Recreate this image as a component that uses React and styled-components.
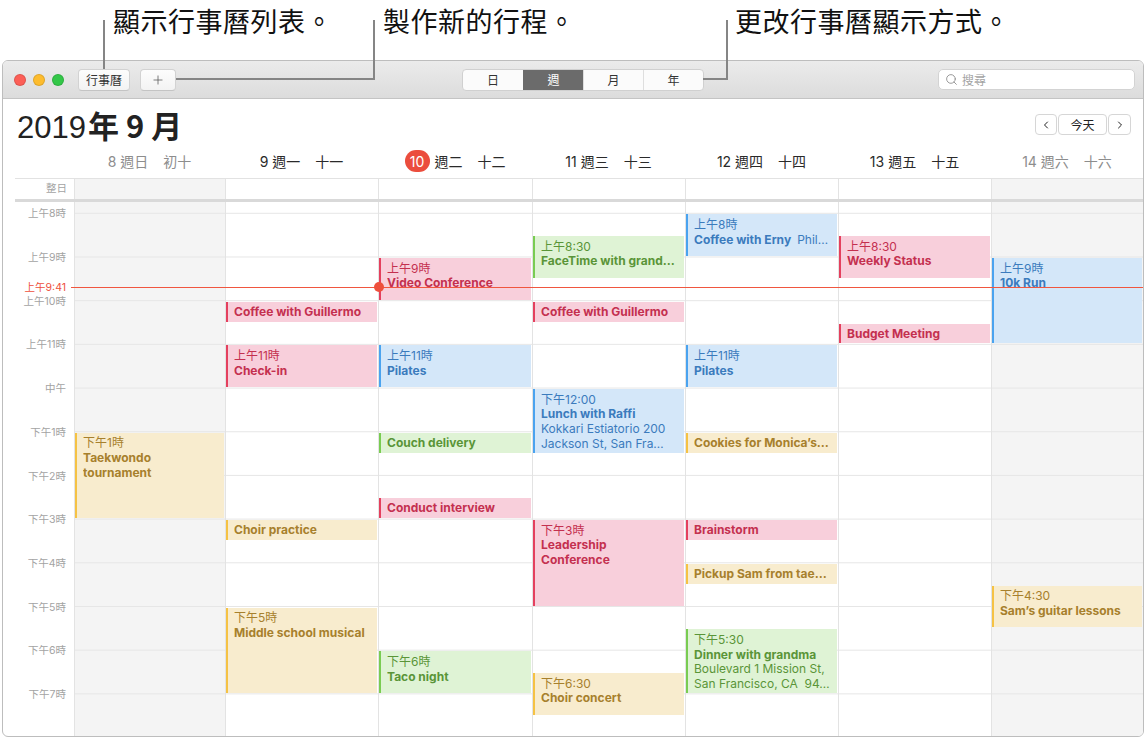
import React from 'react';
import styled, { createGlobalStyle, css } from 'styled-components';
import { Search, ChevronLeft, ChevronRight, Plus } from 'lucide-react';

const FONT = `Inter, "Noto Sans CJK TC", sans-serif`;

const GlobalStyle = createGlobalStyle`
  html, body { margin: 0; padding: 0; background: #fff; }
  body { font-family: ${FONT}; width: 1144px; height: 739px; overflow: hidden; color: #222; }
  * { box-sizing: border-box; }
`;

const HOUR = 43.7;
const OFFSET = 11.3;
const yAt = (h) => OFFSET + (h - 8) * HOUR;
const COLS = `71px 151fr 153fr 154fr 153fr 153fr 153fr 152fr`;

const palette = {
  pink: { bg: '#f8cfdb', bar: '#e4405e', text: '#c4304f' },
  blue: { bg: '#d4e7f9', bar: '#4aa3ef', text: '#3b7bbd' },
  green: { bg: '#dff3d5', bar: '#79cc52', text: '#5a9538' },
  yellow: { bg: '#f8ecce', bar: '#f5c244', text: '#a7802c' },
};

/* ---------- page & annotations ---------- */
const Page = styled.div`
  position: relative;
  width: 1144px;
  height: 739px;
  padding: 60px 0 0 2px;
`;

const Callout = styled.div`
  position: absolute;
  top: 7px;
  font-family: "Noto Sans CJK TC", sans-serif;
  font-size: 27px;
  line-height: 27px;
  letter-spacing: 0.5px;
  color: #111;
  white-space: nowrap;
  z-index: 3;
`;

const Leaders = styled.svg`
  position: absolute;
  left: 0;
  top: 0;
  z-index: 3;
  pointer-events: none;
`;

/* ---------- window ---------- */
const Window = styled.div`
  width: 1142px;
  height: 677px;
  border: 1px solid #bdbdbd;
  border-radius: 6px;
  overflow: hidden;
  display: flex;
  flex-direction: column;
  background: #fff;
`;

const TitleBar = styled.div`
  height: 38px;
  flex: none;
  display: flex;
  align-items: center;
  padding: 0 8px 0 11px;
  background: linear-gradient(#ebebeb, #dcdcdc);
  border-bottom: 1px solid #c4c4c4;
`;

const Light = styled.span`
  width: 12px;
  height: 12px;
  border-radius: 50%;
  background: ${(p) => p.$c};
  border: 0.5px solid rgba(0, 0, 0, 0.12);
  margin-right: ${(p) => (p.$last ? 0 : 7)}px;
`;

const ToolButton = styled.button`
  height: 22px;
  margin-left: ${(p) => p.$ml}px;
  width: ${(p) => p.$w}px;
  padding: 0;
  display: flex;
  align-items: center;
  justify-content: center;
  background: linear-gradient(#fdfdfd, #f3f3f3);
  border: 1px solid #d2d2d2;
  border-bottom-color: #c4c4c4;
  border-radius: 4px;
  font-family: ${FONT};
  font-size: 12px;
  color: #333;
`;

const Segmented = styled.div`
  margin-left: 286px;
  display: flex;
  height: 22px;
  border: 1px solid #d0d0d0;
  border-radius: 4px;
  overflow: hidden;
  background: #fbfbfb;
`;

const Segment = styled.div`
  width: 60px;
  display: flex;
  align-items: center;
  justify-content: center;
  font-size: 12px;
  color: #333;
  border-left: ${(p) => (p.$first ? 'none' : '1px solid #dedede')};
  ${(p) =>
    p.$active &&
    css`
      background: #6b6b6b;
      color: #fff;
      border-left-color: #6b6b6b;
    `}
`;

const SearchBox = styled.div`
  margin-left: auto;
  width: 197px;
  height: 21px;
  display: flex;
  align-items: center;
  gap: 4px;
  padding-left: 6px;
  background: #fff;
  border: 1px solid #d3d3d3;
  border-radius: 5px;
  font-size: 12px;
  color: #a4a4a4;
`;

/* ---------- header ---------- */
const TitleRow = styled.div`
  height: 51px;
  flex: none;
  display: flex;
  align-items: center;
  padding: 0 12px 0 14px;
`;

const MonthTitle = styled.h1`
  margin: 0;
  font-size: 31px;
  font-weight: 400;
  color: #222;
  font-family: "Liberation Sans", "Noto Sans CJK TC", sans-serif;
  b { font-weight: 600; font-family: "Noto Sans CJK TC", sans-serif; margin-left: 2px; }
`;

const NavGroup = styled.div`
  margin-left: auto;
  display: flex;
  height: 21px;
  gap: 1px;
`;

const NavButton = styled.button`
  width: ${(p) => p.$w}px;
  height: 21px;
  padding: 0;
  display: flex;
  align-items: center;
  justify-content: center;
  background: #fff;
  border: 1px solid #d6d6d6;
  border-radius: 4px;
  font-family: ${FONT};
  font-size: 12px;
  color: #222;
`;

const DayHeader = styled.div`
  height: 28px;
  flex: none;
  display: grid;
  grid-template-columns: ${COLS};
`;

const DayLabel = styled.div`
  display: flex;
  justify-content: center;
  align-items: center;
  height: 22px;
  font-size: 14px;
  color: ${(p) => (p.$weekend ? '#8d8d8d' : '#2a2a2a')};
`;

const Lunar = styled.span`
  margin-left: 15px;
`;

const TodayBadge = styled.span`
  display: inline-flex;
  align-items: center;
  justify-content: center;
  width: 25px;
  height: 22px;
  border-radius: 11px;
  background: #eb4d3d;
  color: #fff;
  margin-right: 5px;
`;

const AllDayRow = styled.div`
  margin-left: 12px;
  height: 21px;
  flex: none;
  display: grid;
  grid-template-columns: 59px 151fr 153fr 154fr 153fr 153fr 153fr 152fr;
  border-top: 1px solid #e2e2e2;
`;

const GutterLabel = styled.div`
  font-size: 10.5px;
  color: #a3a3a3;
  text-align: right;
  padding-right: 7px;
  line-height: 20px;
`;

const AllDayCell = styled.div`
  border-left: 1px solid #e3e3e3;
  background: ${(p) => (p.$weekend ? '#f4f4f4' : '#fff')};
`;

const Separator = styled.div`
  margin-left: 12px;
  height: 3px;
  flex: none;
  background: #d9d9d9;
`;

/* ---------- body ---------- */
const Body = styled.div`
  position: relative;
  flex: 1;
  display: grid;
  grid-template-columns: ${COLS};
  overflow: hidden;
`;

const Gutter = styled.div`
  position: relative;
`;

const HourLabel = styled.div`
  position: absolute;
  right: 8px;
  transform: translateY(-55%);
  font-size: 10.5px;
  color: ${(p) => (p.$now ? '#ee4f3c' : '#a3a3a3')};
  white-space: nowrap;
`;

const DayColumn = styled.div`
  position: relative;
  border-left: 1px solid #e3e3e3;
  background-color: ${(p) => (p.$weekend ? '#f4f4f4' : '#fff')};
  background-image: linear-gradient(#e6e6e6 1px, transparent 1px);
  background-size: 100% ${HOUR}px;
  background-position: 0 ${OFFSET - 0.5}px;
`;

const EventBox = styled.div`
  position: absolute;
  left: 0;
  right: 1px;
  overflow: hidden;
  background: ${(p) => palette[p.$c].bg};
  border-left: 2px solid ${(p) => palette[p.$c].bar};
  color: ${(p) => palette[p.$c].text};
  padding: ${(p) => (p.$short ? 3 : 3.5)}px 4px 0 6px;
  font-size: 12px;
  line-height: 14.7px;
`;

const EvLine = styled.div`
  white-space: nowrap;
  overflow: hidden;
  font-weight: ${(p) => (p.$bold ? 700 : 400)};
  span { font-weight: 400; margin-left: 6px; }
`;

const NowLine = styled.div`
  position: absolute;
  left: 68px;
  right: 0;
  height: 1px;
  border-top: 1px solid #f0563f;
  z-index: 2;
  pointer-events: none;
`;

const NowDot = styled.div`
  position: absolute;
  width: 10px;
  height: 10px;
  border-radius: 50%;
  background: #ee4f3c;
  top: -5.5px;
`;

/* ---------- data ---------- */
const days = [
  { n: '8', d: '週日', l: '初十', weekend: true },
  { n: '9', d: '週一', l: '十一' },
  { n: '10', d: '週二', l: '十二', today: true },
  { n: '11', d: '週三', l: '十三' },
  { n: '12', d: '週四', l: '十四' },
  { n: '13', d: '週五', l: '十五' },
  { n: '14', d: '週六', l: '十六', weekend: true },
];

const hours = [
  [8, '上午8時'], [9, '上午9時'], [10, '上午10時'], [11, '上午11時'], [12, '中午'],
  [13, '下午1時'], [14, '下午2時'], [15, '下午3時'], [16, '下午4時'], [17, '下午5時'],
  [18, '下午6時'], [19, '下午7時'],
];

const events = [
  { day: 0, s: 13, e: 15, c: 'yellow', time: '下午1時', title: ['Taekwondo', 'tournament'] },
  { day: 1, s: 10, e: 10.5, c: 'pink', title: ['Coffee with Guillermo'] },
  { day: 1, s: 11, e: 12, c: 'pink', time: '上午11時', title: ['Check-in'] },
  { day: 1, s: 15, e: 15.5, c: 'yellow', title: ['Choir practice'] },
  { day: 1, s: 17, e: 19, c: 'yellow', time: '下午5時', title: ['Middle school musical'] },
  { day: 2, s: 9, e: 10, c: 'pink', time: '上午9時', title: ['Video Conference'] },
  { day: 2, s: 11, e: 12, c: 'blue', time: '上午11時', title: ['Pilates'] },
  { day: 2, s: 13, e: 13.5, c: 'green', title: ['Couch delivery'] },
  { day: 2, s: 14.5, e: 15, c: 'pink', title: ['Conduct interview'] },
  { day: 2, s: 18, e: 19, c: 'green', time: '下午6時', title: ['Taco night'] },
  { day: 3, s: 8.5, e: 9.5, c: 'green', time: '上午8:30', title: ['FaceTime with grand…'] },
  { day: 3, s: 10, e: 10.5, c: 'pink', title: ['Coffee with Guillermo'] },
  { day: 3, s: 12, e: 13.5, c: 'blue', time: '下午12:00', title: ['Lunch with Raffi'], note: ['Kokkari Estiatorio 200', 'Jackson St, San Fra…'] },
  { day: 3, s: 15, e: 17, c: 'pink', time: '下午3時', title: ['Leadership', 'Conference'] },
  { day: 3, s: 18.5, e: 19.5, c: 'yellow', time: '下午6:30', title: ['Choir concert'] },
  { day: 4, s: 8, e: 9, c: 'blue', time: '上午8時', title: ['Coffee with Erny'], inline: 'Phil…' },
  { day: 4, s: 11, e: 12, c: 'blue', time: '上午11時', title: ['Pilates'] },
  { day: 4, s: 13, e: 13.5, c: 'yellow', title: ['Cookies for Monica\u2019s…'] },
  { day: 4, s: 15, e: 15.5, c: 'pink', title: ['Brainstorm'] },
  { day: 4, s: 16, e: 16.5, c: 'yellow', title: ['Pickup Sam from tae…'] },
  { day: 4, s: 17.5, e: 19, c: 'green', time: '下午5:30', title: ['Dinner with grandma'], note: ['Boulevard 1 Mission St,', 'San Francisco, CA\u00a0\u00a094…'] },
  { day: 5, s: 8.5, e: 9.5, c: 'pink', time: '上午8:30', title: ['Weekly Status'] },
  { day: 5, s: 10.5, e: 11, c: 'pink', title: ['Budget Meeting'] },
  { day: 6, s: 9, e: 11, c: 'blue', time: '上午9時', title: ['10k Run'] },
  { day: 6, s: 16.5, e: 17.5, c: 'yellow', time: '下午4:30', title: ['Sam\u2019s guitar lessons'] },
];

const NOW = 9 + 41 / 60;

function Event({ ev }) {
  return (
    <EventBox
      $c={ev.c}
      $short={!ev.time}
      style={{ top: yAt(ev.s) + 1, height: (ev.e - ev.s) * HOUR - 2 }}
    >
      {ev.time && <EvLine>{ev.time}</EvLine>}
      {ev.title.map((t, i) => (
        <EvLine key={i} $bold>
          {t}
          {ev.inline && <span>{ev.inline}</span>}
        </EvLine>
      ))}
      {ev.note && ev.note.map((t, i) => <EvLine key={'n' + i}>{t}</EvLine>)}
    </EventBox>
  );
}

export default function App() {
  return (
    <>
      <GlobalStyle />
      <Page>
        <Callout style={{ left: 113 }}>顯示行事曆列表。</Callout>
        <Callout style={{ left: 383 }}>製作新的行程。</Callout>
        <Callout style={{ left: 735 }}>更改行事曆顯示方式。</Callout>
        <Leaders width="1144" height="100" viewBox="0 0 1144 100">
          <g fill="none" stroke="#858585" strokeWidth="2">
            <polyline points="104,20 104,69" />
            <polyline points="176,79 374,79 374,20" />
            <polyline points="703,79 727,79 727,20" />
          </g>
        </Leaders>

        <Window>
          <TitleBar>
            <Light $c="#fc5f57" />
            <Light $c="#fdbc2e" />
            <Light $c="#33c748" $last />
            <ToolButton $ml={14} $w={52}>行事曆</ToolButton>
            <ToolButton $ml={10} $w={36}>
              <Plus size={14} strokeWidth={1.3} color="#555" />
            </ToolButton>
            <Segmented>
              <Segment $first>日</Segment>
              <Segment $active>週</Segment>
              <Segment>月</Segment>
              <Segment>年</Segment>
            </Segmented>
            <SearchBox>
              <Search size={13} strokeWidth={1.6} color="#8a8a8a" />
              搜尋
            </SearchBox>
          </TitleBar>

          <TitleRow>
            <MonthTitle>
              2019<b>年 9 月</b>
            </MonthTitle>
            <NavGroup>
              <NavButton $w={22}>
                <ChevronLeft size={12} strokeWidth={2} />
              </NavButton>
              <NavButton $w={49}>今天</NavButton>
              <NavButton $w={23}>
                <ChevronRight size={12} strokeWidth={2} />
              </NavButton>
            </NavGroup>
          </TitleRow>

          <DayHeader>
            <div />
            {days.map((d) => (
              <DayLabel key={d.n} $weekend={d.weekend}>
                {d.today ? (
                  <>
                    <TodayBadge>{d.n}</TodayBadge>
                    <span>{d.d}</span>
                  </>
                ) : (
                  <span>
                    {d.n} {d.d}
                  </span>
                )}
                <Lunar>{d.l}</Lunar>
              </DayLabel>
            ))}
          </DayHeader>

          <AllDayRow>
            <GutterLabel>整日</GutterLabel>
            {days.map((d) => (
              <AllDayCell key={d.n} $weekend={d.weekend} />
            ))}
          </AllDayRow>
          <Separator />

          <Body>
            <Gutter>
              {hours.map(([h, label]) => (
                <HourLabel key={h} style={{ top: yAt(h) }}>
                  {label}
                </HourLabel>
              ))}
              <HourLabel $now style={{ top: yAt(NOW) }}>
                上午9:41
              </HourLabel>
            </Gutter>
            {days.map((d, i) => (
              <DayColumn key={d.n} $weekend={d.weekend}>
                {events
                  .filter((ev) => ev.day === i)
                  .map((ev, k) => (
                    <Event key={k} ev={ev} />
                  ))}
              </DayColumn>
            ))}
            <NowLine style={{ top: yAt(NOW) }}>
              <NowDot style={{ left: 376 - 68 - 5 }} />
            </NowLine>
          </Body>
        </Window>
      </Page>
    </>
  );
}
